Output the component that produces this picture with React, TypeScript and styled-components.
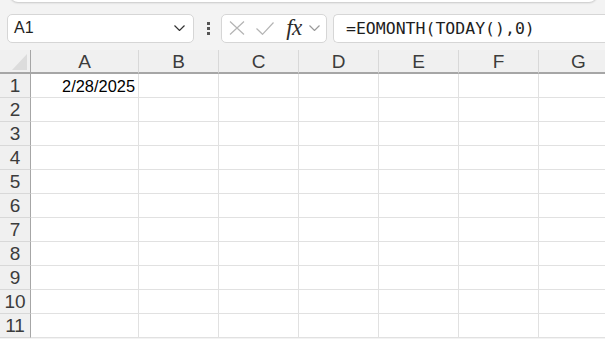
import { Fragment } from "react";
import styled, { createGlobalStyle } from "styled-components";

const GlobalStyle = createGlobalStyle`
  html, body {
    margin: 0;
    padding: 0;
    background: #f3f3f3;
    overflow: hidden;
  }
  * {
    box-sizing: border-box;
  }
`;

const Page = styled.div`
  width: 605px;
  height: 339px;
  overflow: hidden;
  background: #f3f3f3;
  font-family: "Liberation Sans", Arial, sans-serif;
`;

const TopPanel = styled.div`
  height: 8px;
  margin: -6px 8px 0 10px;
  background: #fff;
  border-radius: 0 0 8px 8px;
  box-shadow: 0 1px 2px rgba(0, 0, 0, 0.18);
`;

const FormulaBar = styled.div`
  display: flex;
  align-items: center;
  height: 48px;
  padding: 11px 0 7px 7px;
`;

const NameBox = styled.div`
  display: flex;
  align-items: center;
  justify-content: space-between;
  width: 187px;
  height: 29px;
  padding: 0 8px 0 6px;
  background: #fff;
  border: 1px solid #d6d6d6;
  border-radius: 5px;
  font-size: 16px;
  color: #1e1e1e;
`;

const DotsWrap = styled.div`
  width: 27px;
  display: flex;
  justify-content: center;
  padding-left: 1px;
`;

const Dots = styled.div`
  display: flex;
  flex-direction: column;
  gap: 2px;
  span {
    width: 3px;
    height: 3px;
    background: #555;
  }
`;

const IconBox = styled.div`
  display: flex;
  align-items: center;
  width: 106px;
  height: 29px;
  padding-left: 7px;
  background: #fff;
  border: 1px solid #d6d6d6;
  border-radius: 5px;
  margin-right: 6px;
`;

const IconSlot = styled.div<{ $w: number; $ml?: number }>`
  width: ${(p) => p.$w}px;
  margin-left: ${(p) => p.$ml ?? 0}px;
  display: flex;
  align-items: center;
  justify-content: center;
`;

const Fx = styled.span`
  font-family: "Liberation Serif", "Times New Roman", serif;
  font-style: italic;
  font-size: 23px;
  color: #2b2b2b;
  letter-spacing: -0.5px;
  line-height: 1;
  margin-top: -2px;
`;

const FormulaBox = styled.div`
  flex: 1;
  height: 29px;
  display: flex;
  align-items: center;
  padding-left: 12px;
  background: #fff;
  border: 1px solid #d6d6d6;
  border-right: none;
  border-radius: 5px 0 0 5px;
  font-family: "DejaVu Sans Mono", "Liberation Mono", monospace;
  font-size: 16.5px;
  color: #1e1e1e;
  white-space: nowrap;
`;

const Grid = styled.div`
  display: grid;
  grid-template-columns: 31px 108px repeat(6, 80px);
  grid-template-rows: 24px repeat(11, 24px);
`;

const Corner = styled.div`
  display: flex;
  align-items: flex-end;
  justify-content: flex-end;
  padding: 0 3px 2px 0;
  background: #f0f0f0;
  border-right: 1px solid #a6a6a6;
  border-bottom: 2px solid #a6a6a6;
`;

const Triangle = styled.div`
  width: 0;
  height: 0;
  border-left: 15px solid transparent;
  border-bottom: 16px solid #dcdcdc;
`;

const ColHead = styled.div`
  display: flex;
  align-items: center;
  justify-content: center;
  background: #f0f0f0;
  border-right: 1px solid #d8d8d8;
  border-bottom: 2px solid #a6a6a6;
  font-family: "Liberation Sans Narrow", "Liberation Sans", sans-serif;
  font-size: 19px;
  color: #3c3c3c;
  padding-top: 1px;
`;

const RowHead = styled.div`
  display: flex;
  align-items: center;
  justify-content: center;
  background: #f0f0f0;
  border-right: 1px solid #a6a6a6;
  border-bottom: 1px solid #d8d8d8;
  font-family: "Liberation Sans Narrow", "Liberation Sans", sans-serif;
  font-size: 19px;
  color: #3c3c3c;
  padding-top: 1px;
`;

const Cell = styled.div<{ $align?: string }>`
  display: flex;
  align-items: center;
  justify-content: ${(p) => p.$align ?? "flex-start"};
  padding: 1px 3px 0;
  background: #fff;
  border-right: 1px solid #e1e1e1;
  border-bottom: 1px solid #e1e1e1;
  font-size: 16.4px;
  color: #000;
`;

const columns = ["A", "B", "C", "D", "E", "F", "G"];
const rows = Array.from({ length: 11 }, (_, i) => i + 1);

const values: Record<string, string> = {
  A1: "2/28/2025",
};

function Chevron({ color, w, h }: { color: string; w: number; h: number }) {
  return (
    <svg width={w} height={h} viewBox={`0 0 ${w} ${h}`} fill="none">
      <path
        d={`M0.5 0.5 L${w / 2} ${h - 0.5} L${w - 0.5} 0.5`}
        stroke={color}
        strokeWidth="1.2"
      />
    </svg>
  );
}

function App() {
  return (
    <Page>
      <GlobalStyle />
      <TopPanel />
      <FormulaBar>
        <NameBox>
          <span>A1</span>
          <Chevron color="#333" w={11} h={6} />
        </NameBox>
        <DotsWrap>
          <Dots>
            <span />
            <span />
            <span />
          </Dots>
        </DotsWrap>
        <IconBox>
          <IconSlot $w={16}>
            <svg width="16" height="14" viewBox="0 0 16 14" fill="none">
              <path d="M1 0.5 L15 13.5 M15 0.5 L1 13.5" stroke="#b4b4b4" strokeWidth="1.2" />
            </svg>
          </IconSlot>
          <IconSlot $w={18} $ml={11}>
            <svg width="18" height="13" viewBox="0 0 18 13" fill="none">
              <path d="M0.5 6.5 L6.5 12.3 L17.5 0.5" stroke="#b4b4b4" strokeWidth="1.2" />
            </svg>
          </IconSlot>
          <IconSlot $w={20} $ml={10}>
            <Fx>fx</Fx>
          </IconSlot>
          <IconSlot $w={12} $ml={4}>
            <Chevron color="#9a9a9a" w={11} h={6} />
          </IconSlot>
        </IconBox>
        <FormulaBox>=EOMONTH(TODAY(),0)</FormulaBox>
      </FormulaBar>
      <Grid>
        <Corner>
          <Triangle />
        </Corner>
        {columns.map((c) => (
          <ColHead key={c}>{c}</ColHead>
        ))}
        {rows.map((r) => (
          <Fragment key={r}>
            <RowHead>{r}</RowHead>
            {columns.map((c) => {
              const v = values[`${c}${r}`];
              return (
                <Cell key={`${c}${r}`} $align={v ? "flex-end" : undefined}>
                  {v}
                </Cell>
              );
            })}
          </Fragment>
        ))}
      </Grid>
    </Page>
  );
}

export default App;
